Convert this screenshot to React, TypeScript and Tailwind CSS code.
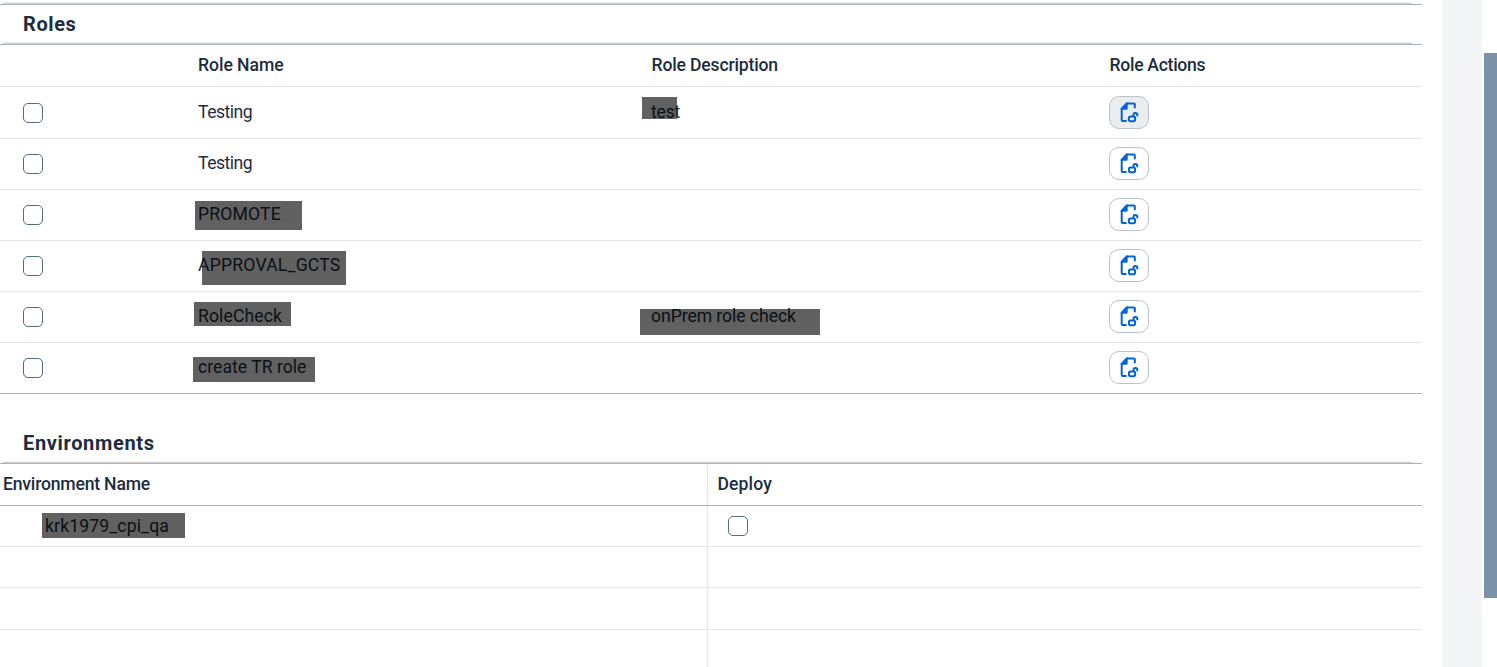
type Box = string;

interface Cell {
  text: string;
  tracking: string;
  mask?: Box;
}

interface RoleRow {
  name: Cell;
  description?: Cell;
  active?: boolean;
}

const roles: RoleRow[] = [
  {
    name: { text: "Testing", tracking: "tracking-[-0.5px]" },
    description: { text: "test", tracking: "tracking-[-0.2px]", mask: "left-[-9px] top-[9.5px] h-[22.5px] w-[35px]" },
    active: true,
  },
  { name: { text: "Testing", tracking: "tracking-[-0.5px]" } },
  { name: { text: "PROMOTE", tracking: "tracking-[0.15px]", mask: "left-[-3px] top-[10.5px] h-[29.5px] w-[107px]" } },
  { name: { text: "APPROVAL_GCTS", tracking: "tracking-[0.2px]", mask: "left-[4px] top-[10px] h-[33.5px] w-[144px]" } },
  {
    name: { text: "RoleCheck", tracking: "tracking-[0.1px]", mask: "left-[-4px] top-[10px] h-[24px] w-[97px]" },
    description: { text: "onPrem role check", tracking: "tracking-[-0.06px]", mask: "left-[-11px] top-[17px] h-[26px] w-[180px]" },
  },
  { name: { text: "create TR role", tracking: "tracking-[0.02px]", mask: "left-[-5.5px] top-[13.5px] h-[25.5px] w-[122.5px]" } },
];

function Checkbox() {
  return (
    <span
      role="checkbox"
      aria-checked="false"
      className="block size-5 shrink-0 rounded-[5px] border border-[#556b82] bg-white"
    />
  );
}

function DocumentUnlockIcon() {
  return (
    <svg width="20" height="21" viewBox="0 0 20 21" fill="none" stroke="#0064d9" strokeWidth="2">
      <path d="M15.8 6.3V2.4a.9.9 0 0 0-.9-.9H8L2.7 7V18.1a.9.9 0 0 0 .9.9H7.6" />
      <path d="M1.7 7.7V6.5L7.4.5h1.3v5.7a1.5 1.5 0 0 1-1.5 1.5z" fill="#0064d9" stroke="none" />
      <rect x="9.9" y="14.6" width="6.2" height="4.6" rx="1.6" />
      <path d="M14.5 14.6v-1.5a1.9 1.9 0 0 1 3.8-.2v1.3" />
    </svg>
  );
}

function CellText({ cell, first }: { cell?: Cell; first: boolean }) {
  if (!cell) return <div />;
  return (
    <div className={`relative h-full ${first ? "pt-3" : "pt-[11px]"}`}>
      <span className={`block whitespace-nowrap leading-[26px] ${cell.tracking}`}>{cell.text}</span>
      {cell.mask && <span className={`absolute bg-black/62 ${cell.mask}`} />}
    </div>
  );
}

const columns = "grid grid-cols-[198px_453px_458px_313px]";

export default function App() {
  return (
    <div className="flex h-[667px] w-full overflow-hidden bg-white font-['Roboto','Liberation_Sans',sans-serif] text-[17.6px] text-[#1d2d3e]">
      <main className="w-[1422px] shrink-0">
        <section>
          <div className="mr-[10px] ml-[3px] mt-[2px] h-0.5 border-b border-[#d0d0d0] bg-[#efefef]" />
          <div className="border-t border-[#a8b2bd]">
            <h2 className="h-[37px] pl-[23px] text-[20px] leading-[38px] font-bold tracking-[0.6px]">Roles</h2>
            <div className="mr-[10px] ml-[3px] h-0.5 border-b border-[#d0d0d0] bg-[#efefef]" />
          </div>
          <div className={`${columns} h-[43px] border-y border-t-[#a8b2bd] border-b-[#e5e5e5] leading-[40px] font-medium`}>
            <span />
            <span className="tracking-[-0.05px]">Role Name</span>
            <span className="pl-[0.5px] tracking-[-0.17px]">Role Description</span>
            <span className="pl-[0.5px] tracking-[-0.3px]">Role Actions</span>
          </div>
          {roles.map((role, i) => (
            <div
              key={i}
              className={`${columns} border-b ${i === 0 ? "h-[52px]" : "h-[51px]"} ${i === roles.length - 1 ? "border-[#a8b2bd]" : "border-[#e5e5e5]"}`}
            >
              <div className={`pl-[23px] ${i === 0 ? "pt-4" : "pt-[15px]"}`}>
                <Checkbox />
              </div>
              <CellText cell={role.name} first={i === 0} />
              <CellText cell={role.description} first={i === 0} />
              <div className={i === 0 ? "pt-[9px]" : "pt-2"}>
                <button
                  aria-label="Edit role"
                  className={`flex h-[33px] w-10 items-center justify-center rounded-[10px] border border-[#bcc3ca] ${role.active ? "bg-[#eaecee]" : "bg-white"}`}
                >
                  <DocumentUnlockIcon />
                </button>
              </div>
            </div>
          ))}
        </section>

        <section className="pt-[29px]">
          <h2 className="h-[38px] pl-[23px] text-[20px] leading-[40px] font-bold tracking-[0.65px]">Environments</h2>
          <div className="mr-[10px] ml-[3px] h-0.5 border-b border-[#d0d0d0] bg-[#efefef]" />
          <div className="grid h-[43px] grid-cols-[708px_714px] border-y border-[#a8b2bd] leading-[40px] font-medium">
            <span className="border-r border-[#e5e5e5] pl-[3px] tracking-[-0.2px]">Environment Name</span>
            <span className="pl-[9.5px] tracking-[0.1px]">Deploy</span>
          </div>
          <div className="grid h-[41px] grid-cols-[708px_714px] border-b border-[#e5e5e5]">
            <div className="border-r border-[#e5e5e5] pl-[45px]">
              <div className="relative">
                <span className="block leading-[40px] tracking-[0.13px]">krk1979_cpi_qa</span>
                <span className="absolute left-[-3px] top-[7px] h-[25px] w-[142.5px] bg-black/62" />
              </div>
            </div>
            <div className="flex items-center pl-5">
              <Checkbox />
            </div>
          </div>
          {["h-[41px]", "h-[42px]", "h-[41px]"].map((height, i) => (
            <div key={i} className={`${height} w-full border-b border-[#e5e5e5]`}>
              <div className="h-full w-[708px] border-r border-[#e5e5e5]" />
            </div>
          ))}
        </section>
      </main>
      <aside className="ml-5 h-full w-10 shrink-0 bg-[#f4f5f7]" />
      <div className="ml-[2px] w-[13px] shrink-0 pt-[53px]">
        <div className="h-[545px] bg-[#7b91a8]" />
      </div>
    </div>
  );
}
